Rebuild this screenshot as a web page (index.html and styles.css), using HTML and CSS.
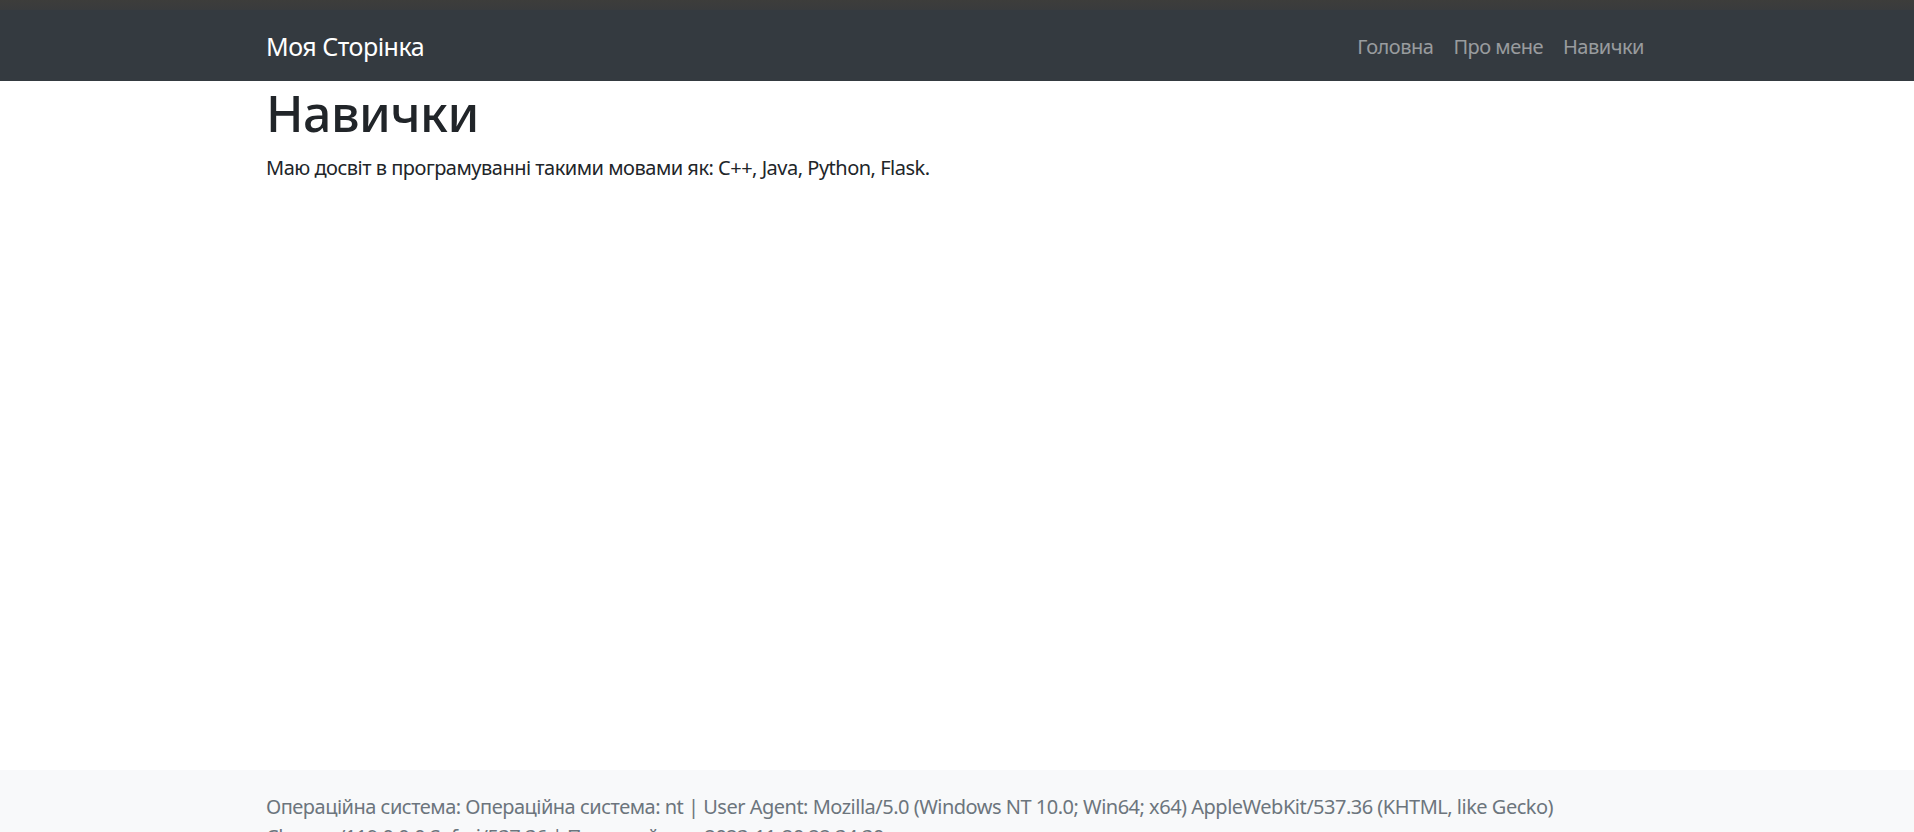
FILE: index.html
```html
<!DOCTYPE html>
<html lang="uk">
<head>
<meta charset="utf-8">
<title>Навички</title>
<link rel="stylesheet" href="styles.css">
</head>
<body>
<div class="topstrip"></div>
<nav class="navbar">
  <div class="container nav-inner">
    <a class="brand" href="#">Моя Сторінка</a>
    <ul class="nav-links">
      <li><a href="#">Головна</a></li>
      <li><a href="#">Про мене</a></li>
      <li><a href="#">Навички</a></li>
    </ul>
  </div>
</nav>
<main class="container main">
  <h1 class="title">Навички</h1>
  <p class="lead-text">Маю досвіт в програмуванні такими мовами як: C++, Java, Python, Flask.</p>
</main>
<footer class="footer">
  <div class="container">
    <span class="muted">Операційна система: Операційна система: nt | User Agent: Mozilla/5.0 (Windows NT 10.0; Win64; x64) AppleWebKit/537.36 (KHTML, like Gecko) Chrome/119.0.0.0 Safari/537.36 | Поточний час: 2023-11-20 22:34:30</span>
  </div>
</footer>
</body>
</html>
```

FILE: styles.css
```css
* { box-sizing: border-box; }
html, body { margin: 0; padding: 0; }
body {
  font-family: "Noto Sans", "Open Sans", sans-serif;
  font-size: 20px;
  line-height: 1.5;
  letter-spacing: -0.025em;
  color: #212529;
  background: #fff;
}
.container {
  width: 1378px;
  margin-left: calc(50% - 691px);
  margin-right: auto;
}
.topstrip {
  height: 10px;
  background: linear-gradient(#3d3d3b, #393b3d);
}
.navbar {
  background: #343a40;
  height: 71px;
  padding-top: 2px;
}
.nav-inner {
  height: 100%;
  display: flex;
  align-items: center;
  justify-content: space-between;
}
.brand {
  color: #fff;
  text-decoration: none;
  font-size: 25px;
  line-height: 1.5;
}
.nav-links {
  list-style: none;
  margin: 0 -10px 0 0;
  padding: 0;
  display: flex;
}
.nav-links a {
  display: block;
  padding: 10px;
  color: rgba(255,255,255,0.5);
  text-decoration: none;
}
.main {
  min-height: 689px;
  padding-top: 2px;
}
.title {
  margin: 0 0 10px;
  font-size: 50px;
  font-weight: 500;
  line-height: 1.2;
}
.lead-text {
  margin: 0;
}
.footer {
  background: #f8f9fa;
  padding: 22px 0 20px;
}
.muted {
  color: #6c757d;
}
```
